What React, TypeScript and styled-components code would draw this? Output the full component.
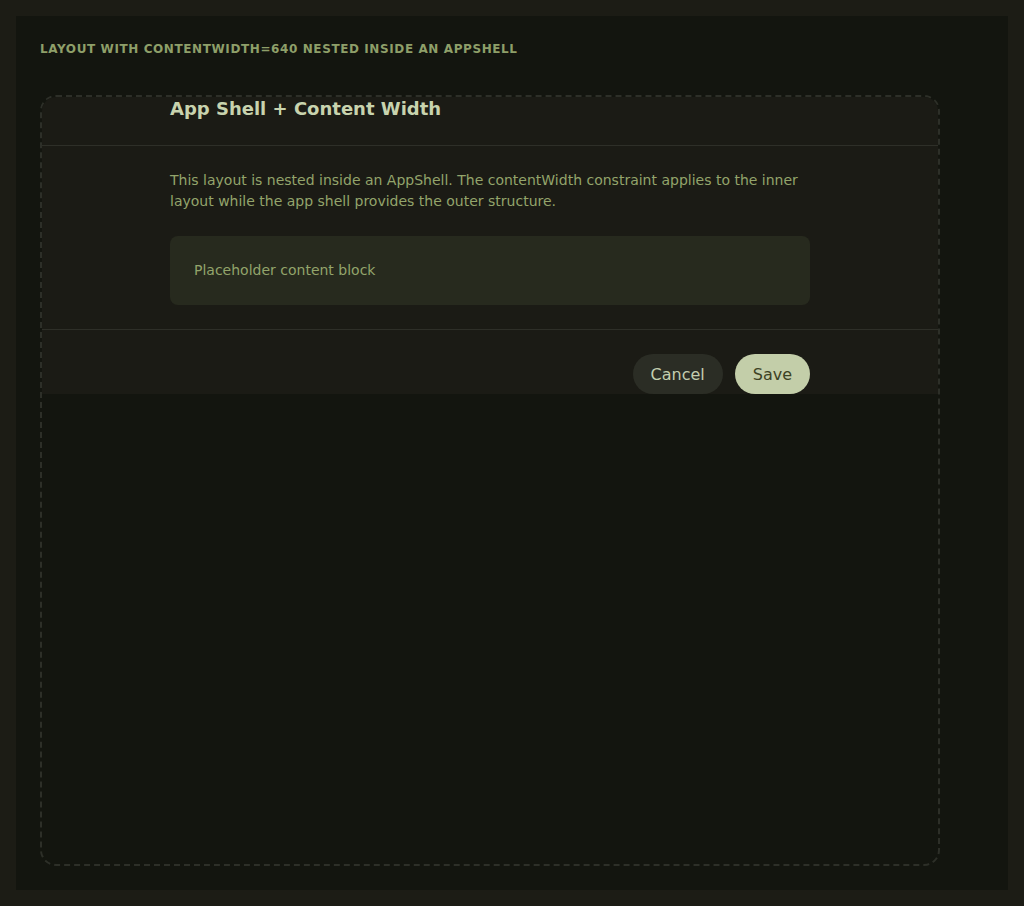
import React from 'react'
import styled, { createGlobalStyle } from 'styled-components'

const GlobalStyle = createGlobalStyle`
    html, body {
        margin: 0;
        padding: 0;
        background: #1c1c15;
    }
    body {
        padding: 16px;
        box-sizing: border-box;
        font-family: "DejaVu Sans", "Liberation Sans", sans-serif;
    }
    * {
        box-sizing: border-box;
    }
`

const Frame = styled.div`
    min-height: calc(100vh - 32px);
    background: #13150f;
    padding: 24px;
    display: flex;
    flex-direction: column;
`

const Caption = styled.div`
    font-size: 12px;
    line-height: 16px;
    font-weight: 700;
    letter-spacing: 0.05em;
    text-transform: uppercase;
    color: #8e9f69;
    margin: 1px 0 38px;
`

const Stage = styled.div`
    flex: 1;
    width: 100%;
    max-width: 900px;
    border: 2px dashed #2d2f28;
    border-radius: 16px;
    overflow: hidden;
`

const Shell = styled.div`
    background: #1b1b15;
`

const Inner = styled.div`
    width: 640px;
    margin: 0 auto;
`

const Header = styled.header`
    border-bottom: 1px solid #2e2f28;
    padding: 0 0 24px;
`

const Title = styled.h1`
    margin: 0;
    font-size: 18px;
    line-height: 24px;
    font-weight: 700;
    color: #c8d3ae;
`

const Body = styled.main`
    border-bottom: 1px solid #2e2f28;
    padding: 24px 0;
`

const Text = styled.p`
    margin: 0 0 24px;
    font-size: 14px;
    line-height: 21px;
    color: #93a46b;
`

const Placeholder = styled.div`
    background: #272a1e;
    border-radius: 8px;
    padding: 24px;
    font-size: 14px;
    line-height: 21px;
    color: #93a46b;
`

const Footer = styled.footer`
    padding: 24px 0 0;
`

const Actions = styled.div`
    display: flex;
    justify-content: flex-end;
    gap: 12px;
`

const Button = styled.button<{ $primary?: boolean }>`
    height: 40px;
    padding: 0 18px;
    border: none;
    border-radius: 20px;
    font-family: inherit;
    font-size: 16px;
    cursor: pointer;
    background: ${p => (p.$primary ? '#c3cea9' : '#2b2d25')};
    color: ${p => (p.$primary ? '#3d4224' : '#c4ceaf')};
`

export default function App() {
    return (
        <>
            <GlobalStyle />
            <Frame>
                <Caption>Layout with contentWidth=640 nested inside an AppShell</Caption>
                <Stage>
                    <Shell>
                        <Header>
                            <Inner>
                                <Title>App Shell + Content Width</Title>
                            </Inner>
                        </Header>
                        <Body>
                            <Inner>
                                <Text>
                                    This layout is nested inside an AppShell. The contentWidth constraint applies to the inner
                                    layout while the app shell provides the outer structure.
                                </Text>
                                <Placeholder>Placeholder content block</Placeholder>
                            </Inner>
                        </Body>
                        <Footer>
                            <Inner>
                                <Actions>
                                    <Button>Cancel</Button>
                                    <Button $primary>Save</Button>
                                </Actions>
                            </Inner>
                        </Footer>
                    </Shell>
                </Stage>
            </Frame>
        </>
    )
}
